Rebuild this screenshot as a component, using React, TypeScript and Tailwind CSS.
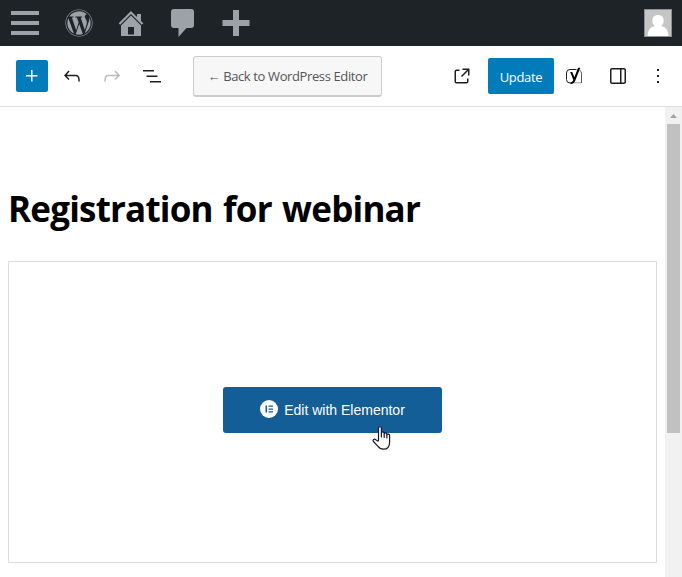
import type { ReactNode } from "react";
import { FaWordpress } from "react-icons/fa";

const UI_FONT = "font-['Open_Sans','Noto_Sans',sans-serif]";

function EditorIcon({ children, className = "" }: { children: ReactNode; className?: string }) {
  return (
    <svg viewBox="0 0 24 24" className={`size-6 shrink-0 fill-current ${className}`} aria-hidden="true">
      {children}
    </svg>
  );
}

function AdminBar() {
  return (
    <header className="flex h-[46px] shrink-0 items-center bg-[#1d2327] text-[#9ca2a7]">
      <button aria-label="Menu" className="ml-[11px] flex w-7 flex-col gap-1.5">
        <span className="h-1 bg-current" />
        <span className="h-1 bg-current" />
        <span className="h-1 bg-current" />
      </button>
      <button aria-label="About WordPress" className="ml-[26px]">
        <FaWordpress className="size-7" />
      </button>
      <button aria-label="Visit site" className="ml-[25px]">
        <svg viewBox="0 0 26 26" className="size-[26px] fill-current">
          <path d="M13 1 19 7V4h4v7l2.300 2.300-1.500 1.500L13 4.100 2.200 14.800.7 13.300z" />
          <path fillRule="evenodd" d="M13 5.500 23 15.400V26H3V15.400zM10 17v7.500h6V17z" />
        </svg>
      </button>
      <button aria-label="Comments" className="ml-[27px]">
        <svg viewBox="0 0 23 28" className="h-7 w-[23px] fill-current">
          <path d="M3 0h17a3 3 0 0 1 3 3v13a3 3 0 0 1-3 3h-4.500L7.500 28v-9H3a3 3 0 0 1-3-3V3a3 3 0 0 1 3-3z" />
        </svg>
      </button>
      <button aria-label="New" className="ml-7">
        <svg viewBox="0 0 28 26" className="h-[26px] w-7 fill-current">
          <path d="M11 0h6v10h10.500v6H17v10h-6V16H.5v-6H11z" />
        </svg>
      </button>
      <button aria-label="Account" className="mr-2.5 ml-auto size-7 border border-[#8c8f94] bg-[#c5c5c5]">
        <svg viewBox="0 0 26 26" className="size-full fill-white">
          <path d="M13 5c3.700 0 5.700 2.300 5.700 5.500 0 2.400-1 4.300-2.500 5.400 4.200.8 6.800 3.600 7.300 10.100H2.500c.5-6.500 3.100-9.300 7.300-10.100-1.500-1.100-2.500-3-2.500-5.400C7.300 7.300 9.300 5 13 5z" />
        </svg>
      </button>
    </header>
  );
}

function Toolbar() {
  return (
    <div className={`flex h-[61px] shrink-0 items-center border-b border-[#e0e0e0] bg-white text-[#1e1e1e] ${UI_FONT}`}>
      <button aria-label="Add block" className="ml-4 flex size-8 items-center justify-center rounded-xs bg-[#007cba] text-white">
        <EditorIcon>
          <path d="M11 12.500V17.500H12.500V12.500H17.500V11H12.500V6H11V11H6V12.500H11Z" />
        </EditorIcon>
      </button>
      <button aria-label="Undo" className="ml-3">
        <EditorIcon>
          <path d="M18.300 11.700c-.6-.6-1.400-.9-2.300-.9H6.700l2.900-3.300-1.100-1-4.500 5L8.500 16l1-1-2.700-2.700H16c.5 0 .9.2 1.300.5 1 1 1 3.400 1 4.500v.3h1.500v-.2c0-1.500 0-4.300-1.500-5.700z" />
        </EditorIcon>
      </button>
      <button aria-label="Redo" className="ml-4 text-[#bbbbbb]">
        <EditorIcon>
          <path d="M15.600 6.500l-1.100 1 2.900 3.300H8c-.9 0-1.700.3-2.300.9-1.400 1.500-1.400 4.200-1.400 5.600v.2h1.500v-.3c0-1.100 0-3.500 1-4.500.3-.3.7-.5 1.300-.5h9.200L14.500 15l1.100 1.100 4.600-4.600-4.600-5z" />
        </EditorIcon>
      </button>
      <button aria-label="Document overview" className="ml-4">
        <EditorIcon>
          <path d="M3 6h11v1.500H3V6Zm3.500 5.500h11V13h-11v-1.500ZM21 17H10v1.500h11V17Z" />
        </EditorIcon>
      </button>
      <button className="ml-[29px] flex h-[41px] w-[189px] items-center justify-center rounded-[3px] border border-b-2 border-[#cccccc] bg-[#f7f7f7] pt-[3px] text-[13px] tracking-[-0.38px] whitespace-nowrap text-[#555555]">
        ← Back to WordPress Editor
      </button>

      <div className="mr-3 ml-auto flex items-center">
        <button aria-label="View post">
          <EditorIcon>
            <path d="M19.500 4.500h-7V6h4.440l-5.970 5.970 1.060 1.060L18 7.060v4.440h1.500v-7Zm-13 1a2 2 0 0 0-2 2v10a2 2 0 0 0 2 2h10a2 2 0 0 0 2-2v-3H17v3a.5.5 0 0 1-.5.5h-10a.5.5 0 0 1-.5-.5v-10a.5.5 0 0 1 .5-.5h3V5.500h-3Z" />
          </EditorIcon>
        </button>
        <button className="ml-3.5 h-9 w-[66px] rounded-xs bg-[#007cba] pt-[3px] text-[13px] tracking-[-0.3px] text-white">
          Update
        </button>
        <button aria-label="Yoast SEO" className="ml-2">
          <EditorIcon>
            <path d="M14.500 5.500H8A3.500 3.500 0 0 0 4.500 9v6.500A3.500 3.500 0 0 0 8 19h1" fill="none" stroke="currentColor" />
            <path d="M12 18.700h7" fill="none" stroke="#bbbbbb" strokeWidth="1.500" />
            <path d="M17.500 6.200a3.500 3.500 0 0 1 2 3V19" fill="none" stroke="#555555" />
            <path d="M8.200 8h2l2.200 5.300L16 3.800h2.300L13.500 16c-.9 2.500-2.200 3.900-4.800 4v-1.800c1.500-.2 2.200-.9 2.600-2.200z" fill="#000000" />
          </EditorIcon>
        </button>
        <button aria-label="Settings" className="ml-5">
          <EditorIcon>
            <path d="M18 4H6c-1.100 0-2 .9-2 2v12c0 1.100.9 2 2 2h12c1.100 0 2-.9 2-2V6c0-1.100-.9-2-2-2zm-4 14.500H6c-.3 0-.5-.2-.5-.5V6c0-.3.2-.5.5-.5h8v13zm4.500-.5c0 .3-.2.5-.5.5h-2.500v-13H18c.3 0 .5.2.5.5v12z" />
          </EditorIcon>
        </button>
        <button aria-label="Options" className="ml-4">
          <EditorIcon>
            <path d="M13 19h-2v-2h2v2zm0-6h-2v-2h2v2zm0-6h-2V5h2v2z" />
          </EditorIcon>
        </button>
      </div>
    </div>
  );
}

function HandPointer() {
  return (
    <svg
      viewBox="0 0 20 24"
      className="pointer-events-none absolute top-[39px] left-[149px] h-6 w-5"
      fill="#ffffff"
      stroke="#1b1b2b"
      strokeWidth="1.2"
      strokeLinejoin="round"
      strokeLinecap="round"
    >
      <path d="M6.500 14V2.300C6.500.2 9.400.2 9.400 2.300V7c0-1.500 2.800-1.400 2.800.2v.6c.2-1.300 2.700-1.100 2.700.4v.6c.3-1.100 2.700-.9 2.700.6v6.500c0 4.500-2.200 7.300-6.100 7.300-3 0-4.600-1.400-5.900-3.300L1.400 15.500c-1.100-1.700.9-3 2.400-1.800l1.500 1.100c.7.500 1.200.1 1.200-.8z" />
      <path d="M9.400 7v4M12.200 7.800V11.500M14.900 8.800V12" fill="none" />
    </svg>
  );
}

function ElementorButton() {
  return (
    <button className="relative flex h-[46px] w-[219px] items-center justify-center rounded-[3px] bg-[#135e96] font-['Liberation_Sans',Arial,sans-serif] text-sm text-white">
      <svg viewBox="0 0 18 18" className="mr-1.5 mb-[3px] size-[18px]">
        <circle cx="9" cy="9" r="9" fill="#ffffff" />
        <path d="M5.500 5.500H7v7H5.500zM8.500 5.500H13v1.300H8.500zM8.500 8.400H13v1.300H8.500zM8.500 11.200H13v1.300H8.500z" fill="#135e96" />
      </svg>
      Edit with Elementor
      <HandPointer />
    </button>
  );
}

function Scrollbar() {
  return (
    <div className="flex w-[17px] shrink-0 flex-col items-center bg-[#f1f1f1]">
      <div className="flex h-[17px] items-center justify-center">
        <svg viewBox="0 0 7 4" className="h-1 w-[7px] fill-[#a3a3a3]">
          <path d="M3.500 0 7 4H0z" />
        </svg>
      </div>
      <div className="h-[309px] w-[13px] bg-[#c1c1c1]" />
    </div>
  );
}

export default function App() {
  return (
    <div className="flex h-screen w-full flex-col overflow-hidden bg-white">
      <AdminBar />
      <Toolbar />
      <div className="flex min-h-0 flex-1">
        <main className="flex-1 px-2 pt-[77px]">
          <h1
            className={`text-[35px] leading-[50px] font-bold tracking-[-0.8px] whitespace-nowrap text-black [word-spacing:2px] ${UI_FONT}`}
          >
            Registration for webinar
          </h1>
          <section className="mt-[27px] flex h-[302px] items-center justify-center border border-[#dddddd] pb-1">
            <ElementorButton />
          </section>
        </main>
        <Scrollbar />
      </div>
    </div>
  );
}
